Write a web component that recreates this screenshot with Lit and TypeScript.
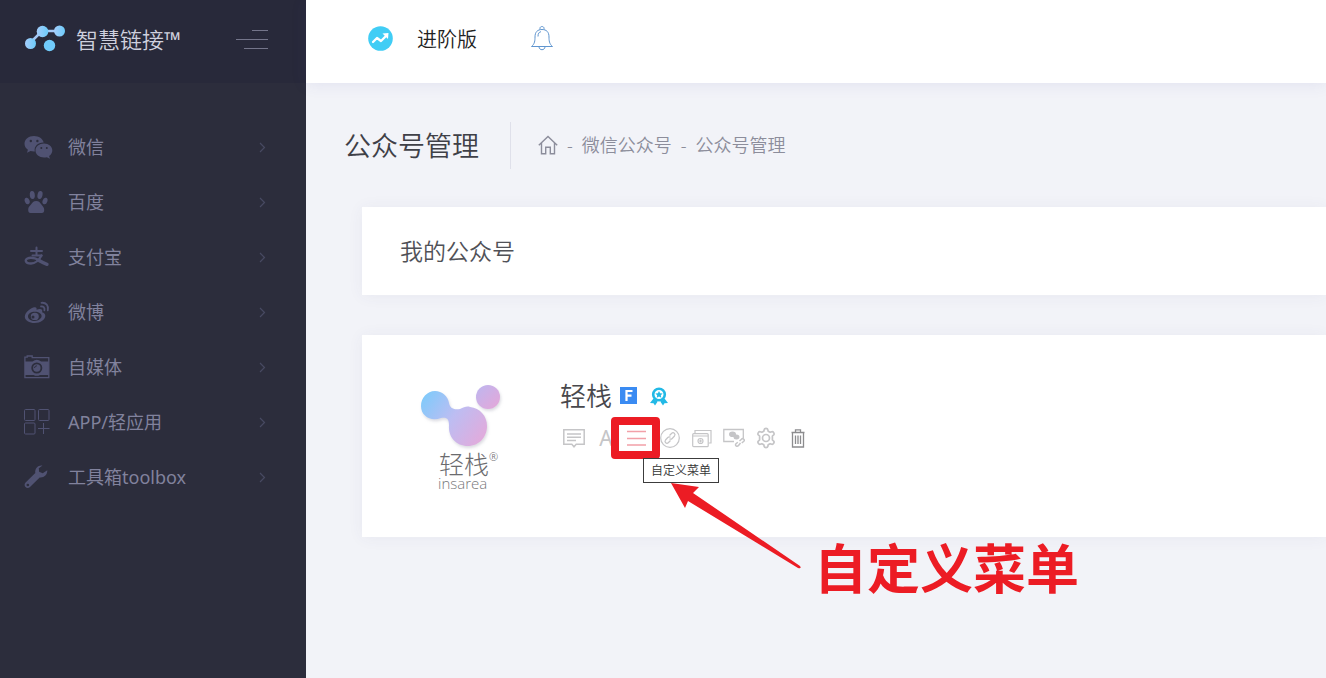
import { LitElement, html, css, svg } from "lit";
import { customElement } from "lit/decorators.js";

const wechat = svg`
  <path fill-rule="evenodd" d="M10 2C4.500 2 .5 5.400.5 9.700c0 2.500 1.300 4.600 3.400 6l-.9 3 3.500-1.800c1 .3 2.200.5 3.500.5h.8c-1-5 3.300-9 8.900-8.800C18.900 4.800 14.800 2 10 2zM6.800 5.800a1.200 1.200 0 1 1 0 2.400 1.200 1.200 0 0 1 0-2.400zm6.600 0a1.200 1.200 0 1 1 0 2.400 1.200 1.200 0 0 1 0-2.400z"/>
  <path fill-rule="evenodd" d="M20 9.600c-4.800 0-8.500 3.100-8.500 7s3.700 7 8.500 7c1 0 2-.1 2.900-.4l3 1.600-.8-2.700c2-1.300 3.200-3.300 3.200-5.500 0-3.900-3.600-7-8.300-7zM17.300 13a1 1 0 1 1 0 2 1 1 0 0 1 0-2zm5.500 0a1 1 0 1 1 0 2 1 1 0 0 1 0-2z"/>`;

const paw = svg`
  <ellipse cx="3.200" cy="12" rx="2.400" ry="3.400" transform="rotate(-20 3.200 12)"/>
  <ellipse cx="8.300" cy="6" rx="2.500" ry="4" transform="rotate(-6 8.300 6)"/>
  <ellipse cx="16" cy="6" rx="2.500" ry="4" transform="rotate(12 16 6)"/>
  <ellipse cx="21" cy="12" rx="2.400" ry="3.400" transform="rotate(20 21 12)"/>
  <path d="M12.200 12c-2.800 0-3.800 1.700-5.200 3.500-1.500 1.800-2.800 2.600-2.800 5.300 0 2.200.8 3.300 2.300 3.300h11.400c1.600 0 2.300-1.200 2.300-3.300 0-2.500-1.500-3.500-2.800-5.300-1.400-1.800-2.400-3.500-5.200-3.500z"/>`;

const alipay = svg`
  <g fill="none" stroke="currentColor" stroke-linecap="round">
    <path stroke-width="2" d="M7 7h11M12.500 3.500v7M8.500 11.500h9"/>
    <path stroke-width="2.400" d="M17.500 11.500c-2.500 4.500-5.500 8-10.500 8-6 0-7-4.500-2-5.500 4-.8 7 .5 10.500 2.300"/>
    <path stroke-width="3.400" d="M15 16.500c3 1.700 5.500 3 8 3.800"/>
  </g>`;

const weibo = svg`
  <path fill-rule="evenodd" d="M10.500 8.200C7 8.600 1 13.200.8 17.500c-.1 4 4.600 6.500 9.800 6.500 6 0 10.700-3.300 10.700-7.200 0-2-1.400-3.100-3.200-3.600.7-2-.2-4.500-5.600-2.500.4-1.600 0-2.700-2-2.500zm.3 4.600c4 0 6.800 1.900 6.800 4.300S14.600 22 10.800 22 4 20 4 17.400s3-4.600 6.800-4.600z"/>
  <path fill-rule="evenodd" d="M10.800 13.800a4 3.600 0 1 0 0 7.200 4 3.600 0 0 0 0-7.200zM9 16.500a1.500 1.500 0 1 1 0 3 1.500 1.500 0 0 1 0-3z"/>
  <path fill="none" stroke="currentColor" stroke-width="1.800" stroke-linecap="round" d="M17 7.500c2.600-.3 4 1.400 3.400 3.800M17.500 3.800c4.600-.5 7.400 3 6.300 7.600"/>`;

const camera = svg`
  <path fill="none" stroke="currentColor" stroke-width="1.300" d="M.9 6V3.200h2.300V2h5v1.600h16.600v20H.9V6"/>
  <path fill-rule="evenodd" d="M1 7.500h7.500a7 7 0 0 1 8.600 0h7.600V21H16a7 7 0 0 1-6.500 0H1zM12.800 8.500a5.500 5.500 0 1 0 0 11 5.500 5.500 0 0 0 0-11z"/>
  <circle cx="12.800" cy="14" r="3.700"/><path fill="none" stroke="#2c2d3c" d="M10.500 14a2.400 2.400 0 0 1 2.400-2.200"/>`;

const apps = svg`
  <g fill="none" stroke="currentColor" stroke-width="1">
    <rect x=".5" y=".5" width="10.500" height="11" rx="1"/><rect x="14.500" y=".5" width="10.500" height="11" rx="1"/>
    <rect x=".5" y="14" width="10.500" height="11" rx="1"/><path d="M19.500 14v11M14 19.500h11.500"/>
  </g>`;

const wrench = svg`
  <path fill-rule="evenodd" d="M18.500 1.500c-4.300-.7-8 2.900-7.200 7.500L1.600 18.600c-1.300 1.300-1.300 3.200-.1 4.400 1.200 1.300 3.200 1.300 4.500 0l9.700-9.600c3.900.6 7.800-2.300 7.600-7.100l-4.600 3-3.600-1.600-.3-3.400zM3.800 19.700a1.300 1.300 0 1 1 0 2.600 1.300 1.300 0 0 1 0-2.600z"/>`;

const MENU = [
  { label: "微信", icon: wechat, solid: true },
  { label: "百度", icon: paw, solid: true },
  { label: "支付宝", icon: alipay },
  { label: "微博", icon: weibo, solid: true },
  { label: "自媒体", icon: camera, solid: true },
  { label: "APP/轻应用", icon: apps },
  { label: "工具箱toolbox", icon: wrench, solid: true },
];

const gearPath = "M9.200 2.500c.3-1.500 3.300-1.500 3.600 0l.4 1.700 1.900 1.100 1.700-.6c1.400-.5 3 2 1.900 3.100L17.400 9v4l1.300 1.200c1.100 1-.5 3.600-1.900 3.100l-1.700-.6-1.900 1.100-.4 1.700c-.3 1.500-3.300 1.500-3.600 0l-.4-1.700-1.900-1.100-1.700.6c-1.400.5-3-2.100-1.900-3.100L4.600 13V9L3.300 7.800c-1.100-1.100.5-3.600 1.900-3.100l1.700.6 1.900-1.100z";

@customElement("side-menu")
export class SideMenu extends LitElement {
  static styles = css`
    :host { display: flex; flex-direction: column; background: #2c2d3c; color: #81829d; }
    .brand { height: 83px; box-sizing: border-box; padding: 0 38px 6px 24px; background: #28293a; display: flex; align-items: center; }
    .logo { width: 42px; height: 27px; margin-right: 10px; }
    .name { color: #cfd0de; font-size: 22px; line-height: 28px; display: flex; }
    .mark { line-height: 28px; font-weight: 400; }
    .toggle { margin-left: auto; border: 0; background: none; padding: 0; width: 32px; height: 20px; color: #74758a; cursor: pointer; }
    ul { list-style: none; margin: 0; padding: 36px 0 0; }
    .item { display: flex; align-items: center; height: 55px; padding: 0 37px 0 24px; font-size: 18px; line-height: 26px; font-weight: 400; color: inherit; text-decoration: none; }
    .icon { width: 30px; height: 26px; margin-right: 14px; color: #505272; fill: none; }
    .solid { fill: currentColor; }
    .arrow { width: 14px; height: 14px; margin-left: auto; color: #484a62; }
    svg { display: block; flex: none; }
  `;
  render() {
    return html`
      <div class="brand">
        <svg class="logo" viewBox="0 0 42 27">
          <defs><linearGradient id="b"><stop stop-color="#a5cdfb" /><stop offset="1" stop-color="#6ccbfa" /></linearGradient></defs>
          <path d="M6 18 18 6l18 0" fill="none" stroke="#a5c8f5" stroke-width="2.500" />
          <g fill="url(#b)"><circle cx="6.500" cy="18.500" r="5.500" /><circle cx="18.500" cy="6.500" r="5.800" /><circle cx="35.500" cy="6" r="5.500" /><circle cx="25.500" cy="20.500" r="5.700" fill="#71cbfb" /></g>
        </svg>
        <span class="name">智慧链接<span class="mark">™</span></span>
        <button class="toggle" aria-label="菜单">
          <svg viewBox="0 0 32 20" stroke="currentColor"><path d="M16 1.500h16M0 10.500h32M8 19.500h24" /></svg>
        </button>
      </div>
      <nav><ul>
        ${MENU.map((m) => html`<li><a class="item" href="#">
          <svg class="icon ${m.solid ? "solid" : ""}" viewBox="0 0 30 26">${m.icon}</svg>
          <span>${m.label}</span>
          <svg class="arrow" viewBox="0 0 14 14" fill="none" stroke="currentColor" stroke-width="1.200"><path d="m5 3 4.500 4.500L5 12" /></svg>
        </a></li>`)}
      </ul></nav>`;
  }
}

@customElement("account-card")
export class AccountCard extends LitElement {
  static styles = css`
    :host { display: flex; background: #fff; min-height: 202px; box-sizing: border-box; padding: 43px 0 30px 56px; box-shadow: 0 1px 15px rgba(69, 65, 120, 0.06); }
    svg { display: block; flex: none; }
    .logo { margin: 0 51px 0 0; width: 89px; color: #6b6b6e; }
    .art { width: 88px; height: 73px; }
    .cn { display: flex; font-size: 25px; line-height: 26px; font-weight: 300; padding-left: 21px; }
    .reg { font-size: 11px; line-height: 12px; }
    .en { display: block; padding-left: 20px; font-family: "Open Sans", sans-serif; font-weight: 300; font-size: 15px; line-height: 12px; color: #77777a; }
    .title { display: flex; align-items: center; padding-left: 2px; height: 35px; }
    h3 { margin: 0 8px 0 0; font-size: 26px; line-height: 34px; font-weight: 350; color: #48484c; }
    .flag { width: 17px; height: 17px; margin-right: 13px; }
    .medal { width: 18px; height: 20px; }
    .actions { display: flex; padding-top: 11px; }
    .action { position: relative; width: 32px; height: 28px; display: grid; place-items: center; }
    button { border: 0; padding: 0; background: none; width: 32px; height: 28px; display: grid; place-items: center; color: #c5c5c7; font-family: inherit; font-size: 21px; line-height: 28px; cursor: pointer; }
    .hot { color: #f2a0a8; }
    .dark { color: #8c8c8e; }
    .frame { position: absolute; z-index: 1; left: -11px; top: -7px; width: 49px; height: 42px; box-sizing: border-box; border: 8px solid #ec1c24; border-radius: 4px; pointer-events: none; }
    .tip { position: absolute; z-index: 2; left: 21px; top: 34px; box-sizing: border-box; width: 76px; height: 25px; border: 1px solid #3c3c3c; background: #fff; color: #333; font-size: 12px; line-height: 23px; text-align: center; white-space: nowrap; }
    .pointer { position: absolute; z-index: 1; left: 49px; top: 59px; width: 131px; height: 87px; }
    .note { position: absolute; left: 192px; top: 109px; font-size: 53px; line-height: 72px; font-weight: 700; color: #ec1c24; white-space: nowrap; }
  `;
  render() {
    return html`
      <figure class="logo">
        <svg class="art" viewBox="0 0 88 73">
          <defs>
            <linearGradient id="g" gradientUnits="userSpaceOnUse" x1="4" y1="15" x2="68" y2="60"><stop stop-color="#7ccbfb" /><stop offset=".5" stop-color="#bdbdf2" /><stop offset="1" stop-color="#e3aadb" /></linearGradient>
            <linearGradient id="h" x2="1" y2="1"><stop stop-color="#bdb7f0" /><stop offset="1" stop-color="#e6a6d8" /></linearGradient>
            <filter id="s" x="-20%" y="-20%" width="150%" height="150%"><feDropShadow dx="1" dy="2" stdDeviation="1.500" flood-color="#99a" flood-opacity=".35" /></filter>
          </defs>
          <g filter="url(#s)">
            <path fill="url(#g)" d="M17 13c7 0 13 5 14 12 1 5 4 7 11 6 4-2 7-3 10-2 10 1 17 9 17 19 0 11-8 20-19 20-12 0-20-9-19-21 0-6-2-8-8-7-10 4-20-2-20-12 0-8 6-15 14-15z" />
            <circle cx="70" cy="19" r="12" fill="url(#h)" />
          </g>
        </svg>
        <span class="cn">轻栈<span class="reg">®</span></span>
        <span class="en">insarea</span>
      </figure>
      <div>
        <div class="title">
          <h3>轻栈</h3>
          <svg class="flag" viewBox="0 0 17 17"><path fill="#3a8bf2" d="M0 0h17v17H0z" /><path d="M6.500 14V4h6M6.500 8.700h5" fill="none" stroke="#fff" stroke-width="2.200" /></svg>
          <svg class="medal" viewBox="0 0 18 20" fill="none" stroke="#22b9e6"><circle cx="9" cy="8.500" r="5.800" stroke-width="2.600" /><path fill="#22b9e6" stroke="none" d="m9 5 1.100 2.300 2.500.3-1.800 1.700.5 2.500L9 10.600l-2.300 1.200.5-2.500-1.800-1.700 2.500-.3z" /><path fill="#22b9e6" stroke="none" d="M3.500 12.500 0 17l3.500.3L5 19.500l2.700-4zM14.500 12.500 18 17l-3.500.3-1.500 2.200-2.700-4z" /></svg>
        </div>
        <div class="actions">
          <div class="action"><button aria-label="回复"><svg width="22" height="20" viewBox="0 0 22 20" fill="none" stroke="currentColor" stroke-width="1.500"><path d="M.8 1.800h20.400v14.500h-8L11 18.800l-2.200-2.500h-8zM4 6h14M4 9.200h14M4 12.400h9" /></svg></button></div>
          <div class="action"><button>A</button></div>
          <div class="action">
            <button class="hot" aria-labelledby="tip"><svg width="22" height="16" viewBox="0 0 22 16" stroke="currentColor" stroke-width="1.300"><path d="M0 1.500h19M0 8.500h19M0 15h19" /></svg></button>
            <span class="frame"></span>
            <svg class="pointer" viewBox="0 0 131 87" fill="#ec1c24"><path d="M0 0l28 4-6 6 107 73q2 3-2 2L17 18l-3 7z" /></svg>
            <span class="tip" id="tip" role="tooltip">自定义菜单</span>
            <span class="note">自定义菜单</span>
          </div>
          <div class="action"><button aria-label="链接"><svg width="20" height="20" viewBox="0 0 20 20" fill="none" stroke="currentColor" stroke-width="1.200"><circle cx="10" cy="10" r="9.300" /><path d="m9.500 7.500 2-2c2-2 4.500.5 3 2.500l-2.300 2.500c-.8.8-2 .7-2.700.2M10.500 12.500l-2 2c-2 2-4.500-.5-3-2.500l2.300-2.500c.8-.8 2-.7 2.700-.2" /></svg></button></div>
          <div class="action"><button aria-label="素材"><svg width="20" height="19" viewBox="0 0 20 19" fill="none" stroke="currentColor" stroke-width="1.200"><rect x=".7" y="4.700" width="15.500" height="13" rx="1" /><path d="M3 4.500V1.500h16v12.500h-2.500M1 7h15" /><circle cx="8.500" cy="12" r="2.500" /><path d="M8.500 10.500v3M7 12h3" /></svg></button></div>
          <div class="action"><button aria-label="互动"><svg width="22" height="20" viewBox="0 0 22 20" fill="none" stroke="currentColor" stroke-width="1.300"><path d="M11 13.500H.8V1.500h19.500V10" /><path fill="currentColor" stroke="none" d="M9.500 3.500a3.500 2.800 0 1 0 0 5.600 3.500 2.800 0 0 0 0-5.600zM13.500 6.500a3 2.500 0 1 0 0 5 3 2.500 0 0 0 0-5z" /><path stroke-width="1.500" d="m16.500 13 2-1.800c1.800-1.500 3.500.8 2.300 2l-2 1.800M17.500 15l-2 2.500c-1.500 1.800-4 0-2.500-1.700l1.800-1.600" /></svg></button></div>
          <div class="action"><button aria-label="设置"><svg width="22" height="22" viewBox="0 0 22 22" fill="none" stroke="currentColor" stroke-width="1.700"><path stroke-linejoin="round" d=${gearPath} /><circle cx="11" cy="11" r="3.500" /></svg></button></div>
          <div class="action"><button class="dark" aria-label="删除"><svg width="14" height="19" viewBox="0 0 14 19" fill="none" stroke="currentColor" stroke-width="1.300"><path d="M.5 3.500h13M4.500 3V.9h5V3M1.500 4v14h11V4M4.500 6.500v8.500M7 6.500v8.500M9.500 6.500v8.500" /></svg></button></div>
        </div>
      </div>`;
  }
}

@customElement("app-root")
export class AppRoot extends LitElement {
  static styles = css`
    :host { display: flex; min-height: 100vh; overflow: hidden; background: #f2f3f8; font-family: "Noto Sans", "Noto Sans CJK SC", sans-serif; font-weight: 350; }
    side-menu { flex: 0 0 306px; }
    main { flex: 1; min-width: 0; }
    svg { display: block; flex: none; }
    .top { height: 83px; box-sizing: border-box; padding: 0 62px 6px; background: #fff; display: flex; align-items: center; box-shadow: 0 1px 15px rgba(69, 65, 160, 0.1); }
    .trend { width: 25px; height: 25px; margin-right: 24px; }
    .plan { font-size: 20px; line-height: 28px; color: #222; margin-right: 54px; padding-top: 3px; }
    .bell { border: 0; padding: 0; background: none; width: 22px; height: 28px; cursor: pointer; }
    .sub { height: 124px; display: flex; align-items: center; padding-left: 38px; }
    h1 { margin: 0; font-size: 27px; line-height: 47px; font-weight: 350; color: #3f4047; padding-right: 31px; border-right: 1px solid #dfe0ea; }
    .crumbs { display: flex; align-items: center; gap: 9px; padding-left: 27px; font-size: 18px; line-height: 26px; color: #8c8d9b; }
    .crumbs a { color: inherit; text-decoration: none; }
    .cards { display: flex; flex-direction: column; gap: 40px; padding: 0 0 40px 56px; }
    .heading { background: #fff; box-shadow: 0 1px 15px rgba(69, 65, 120, 0.06); padding: 28px 38px; }
    h2 { margin: 0; font-size: 23px; line-height: 32px; font-weight: 350; color: #505157; }
  `;
  render() {
    return html`
      <side-menu></side-menu>
      <main>
        <header class="top">
          <svg class="trend" viewBox="0 0 25 25"><circle cx="12.500" cy="12.500" r="12.300" fill="#41cdf5" /><path d="m5 16 4-4 4 3 5-5" fill="none" stroke="#fff" stroke-width="2.300" stroke-linejoin="round" stroke-linecap="round" /><path fill="#fff" d="m14.500 7.500 6-.5-.5 6z" /></svg>
          <span class="plan">进阶版</span>
          <button class="bell" aria-label="通知"><svg viewBox="0 0 22 28" fill="none" stroke="#5f95cf"><path d="M9 4.500V3.200c0-2.200 4-2.200 4 0v1.300M.5 21.500h21c-3.300-2.600-3.500-6-3.500-9.500 0-5-2.500-7.500-7-7.500S4 7 4 12c0 3.500-.2 6.900-3.500 9.500zM8 22c.3 3.600 5.700 3.600 6 0M7 11.500c0-3 1-4.500 3-4.800" /></svg></button>
        </header>
        <div class="sub">
          <h1>公众号管理</h1>
          <nav class="crumbs">
            <a href="#" aria-label="首页"><svg width="20" height="20" viewBox="0 0 20 20" fill="none" stroke="currentColor" stroke-width="1.400"><path d="M.8 10.300 10 1.500l9.200 8.800M3.500 8v10.800h4.200v-6.500h4.600v6.500h4.200V8" /></svg></a>
            <span>-</span><a href="#">微信公众号</a><span>-</span><a href="#">公众号管理</a>
          </nav>
        </div>
        <div class="cards">
          <section class="heading"><h2>我的公众号</h2></section>
          <account-card></account-card>
        </div>
      </main>`;
  }
}
